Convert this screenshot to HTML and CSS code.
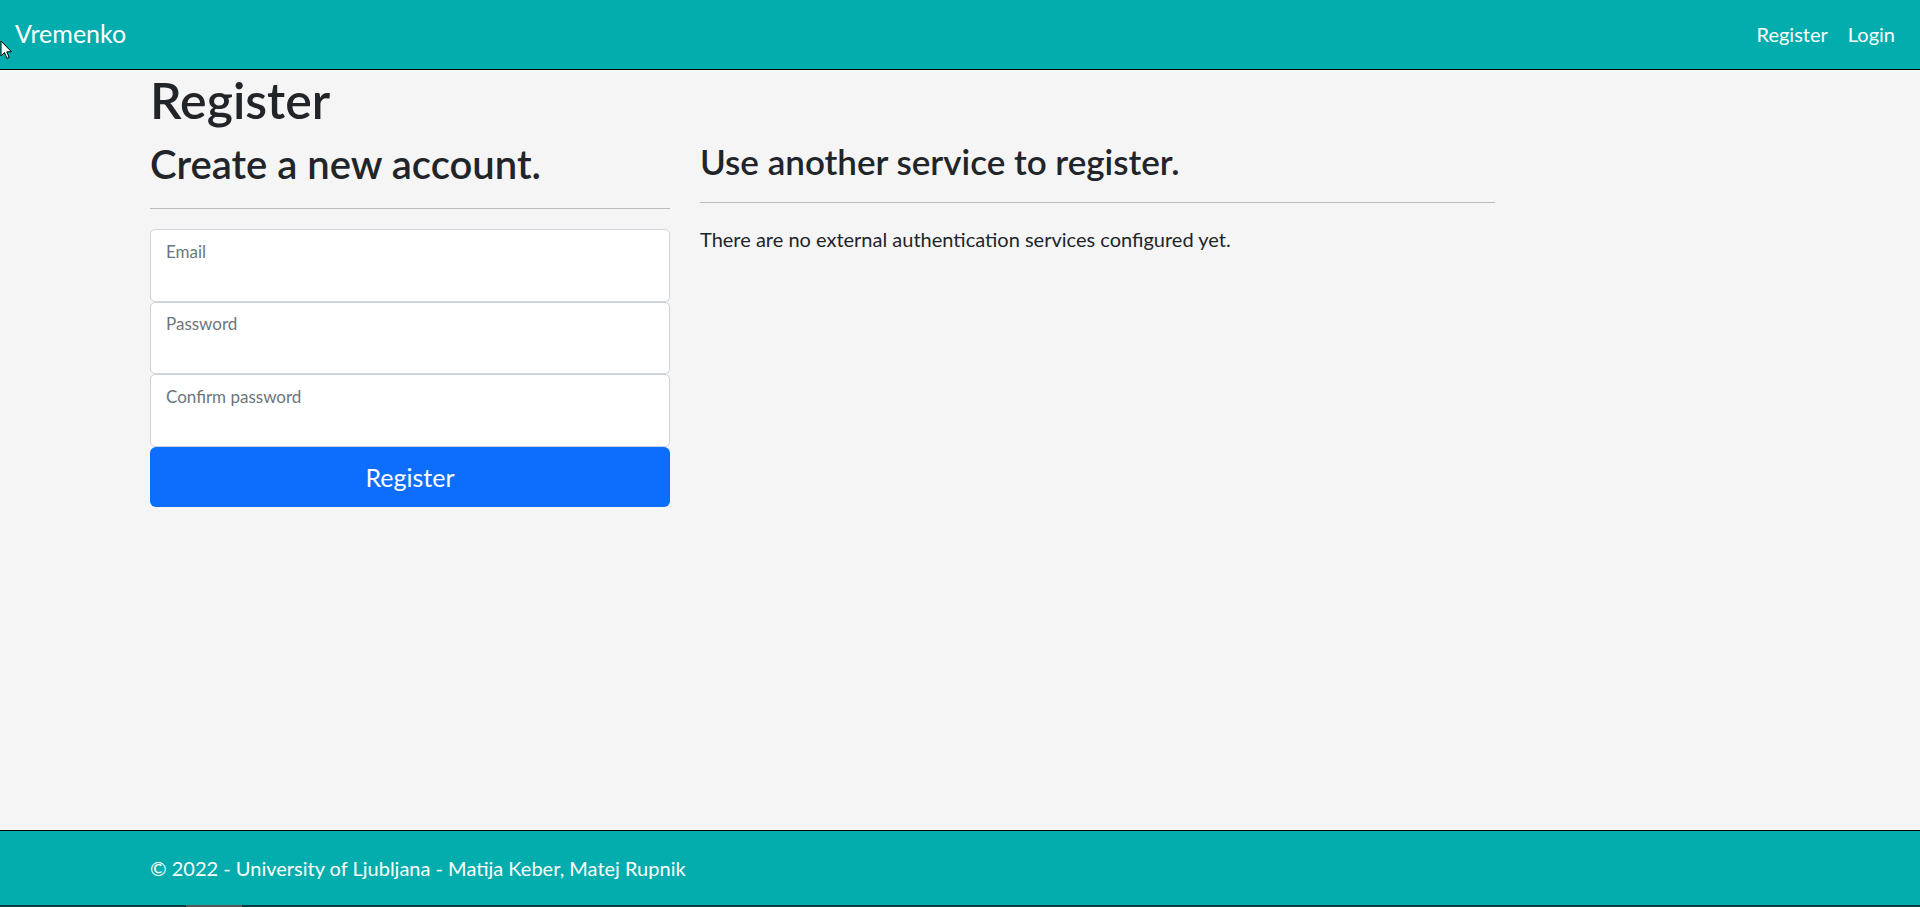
FILE: index.html
```html
<!DOCTYPE html>
<html lang="en">
<head>
<meta charset="utf-8">
<title>Register - Vremenko</title>
<link rel="stylesheet" href="styles.css">
</head>
<body>
<header class="topbar">
  <a class="brand" href="#">Vremenko</a>
  <nav class="nav">
    <a class="nav-link" href="#">Register</a>
    <a class="nav-link" href="#">Login</a>
  </nav>
  <svg class="cursor" width="13" height="20" viewBox="0 0 13 20"><path d="M1 1 L1 16 L4.5 12.5 L7 18.5 L9.2 17.5 L6.8 11.8 L11.5 11.8 Z" fill="#fff" stroke="#000" stroke-width="1"/></svg>
</header>
<main class="container">
  <h1 class="page-title">Register</h1>
  <div class="row">
    <section class="col-left">
      <form class="reg-form">
        <h2 class="form-title">Create a new account.</h2>
        <hr class="rule">
        <div class="floating"><input class="field" type="email"><label class="float-label">Email</label></div>
        <div class="floating"><input class="field" type="password"><label class="float-label">Password</label></div>
        <div class="floating"><input class="field" type="password"><label class="float-label">Confirm password</label></div>
        <button class="btn-primary" type="button">Register</button>
      </form>
    </section>
    <section class="col-right">
      <h3 class="side-title">Use another service to register.</h3>
      <hr class="rule">
      <p class="note">There are no external authentication services configured yet.</p>
    </section>
  </div>
</main>
<footer class="footer">
  <div class="footer-inner">© 2022 - University of Ljubljana - Matija Keber, Matej Rupnik</div>
  <div class="footer-strip"><span class="strip-thumb"></span></div>
</footer>
</body>
</html>
```
FILE: styles.css
```css
* { box-sizing: border-box; }
html, body { margin: 0; padding: 0; }
body {
  height: 907px;
  display: flex;
  flex-direction: column;
  background: #f5f5f5;
  color: #212529;
  font-family: Lato, "Liberation Sans", sans-serif;
  font-size: 20px;
  line-height: 1.5;
  overflow: hidden;
}
.topbar {
  position: relative;
  height: 70px;
  flex: none;
  background: #03adad;
  border-bottom: 1px solid #000;
  display: flex;
  align-items: center;
  justify-content: space-between;
  padding: 0 15px;
}
.brand { color: #fff; text-decoration: none; font-size: 25px; margin-top: -2px; }
.nav { display: flex; margin-top: -2px; }
.nav-link { color: #fff; text-decoration: none; padding: 0 10px; font-size: 20px; }
.cursor { position: absolute; left: 0; top: 40px; }
.container { flex: 1; padding: 0 150px; }
.page-title { margin: 0 0 10px; font-size: 50px; font-weight: 600; line-height: 60px; }
.row { display: flex; gap: 30px; }
.col-left { width: 520px; }
.col-right { width: 795px; }
.form-title { margin: 0 0 10px; font-size: 40px; font-weight: 600; line-height: 48px; }
.side-title { margin: 0 0 10px; font-size: 35px; font-weight: 600; line-height: 42px; }
.rule { margin: 20px 0; border: 0; border-top: 1px solid #212529; opacity: .27; }
.floating { position: relative; }
.field {
  display: block;
  width: 100%;
  height: 72.5px;
  border: 1px solid #ced4da;
  border-radius: 5px;
  background: #fff;
}
.float-label {
  position: absolute;
  left: 16px;
  top: 12.5px;
  font-size: 17px;
  line-height: 20px;
  color: #6c757d;
}
.btn-primary {
  display: block;
  width: 100%;
  height: 60px;
  border: 0;
  border-radius: 6px;
  background: #0d6efd;
  color: #fff;
  font-family: inherit;
  font-size: 25px;
}
.note { margin: 0; padding-top: 1px; }
.footer {
  height: 77px;
  flex: none;
  background: #03adad;
  border-top: 1px solid #000;
  display: flex;
  flex-direction: column;
}
.footer-inner { flex: 1; display: flex; align-items: center; padding: 0 150px; color: #fff; }
.footer-strip { height: 2px; background: #0e3b3b; position: relative; }
.strip-thumb { position: absolute; left: 186px; width: 56px; top: 0; height: 2px; background: #555; }
```
